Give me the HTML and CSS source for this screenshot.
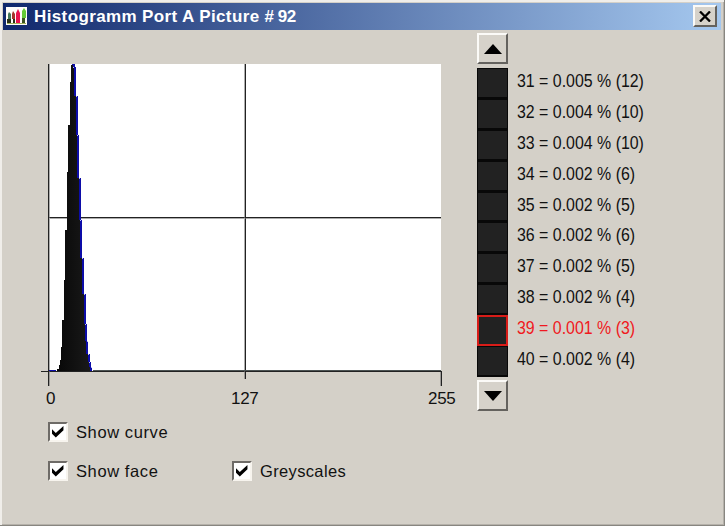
FILE: index.html
```html
<!DOCTYPE html>
<html lang="en">
<head>
<meta charset="utf-8">
<title>Histogramm</title>
<link rel="stylesheet" href="styles.css">
</head>
<body>
<div class="window">
  <header class="titlebar">
    <svg class="app-icon" width="21" height="18" viewBox="0 0 21 18">
      <path fill="#fffdfa" d="M0 0h21v18H0z"/>
      <path fill="#44775a" d="M2 7l1-2 2 2v10H2z"/>
      <path fill="#292f18" d="M1 12h4v5H1zM7 10h2v7H7z"/>
      <path fill="#a5332b" d="M6 7l1-3 2 3v5H6z"/>
      <path fill="#e9134e" d="M10 6l2-4 2 4v11h-4z"/>
      <path fill="#65cb36" d="M16 4l2-3 2 3v7h-4z"/>
      <path fill="#3c5520" d="M16 11h3v6h-3z"/>
      <path fill="#a3b45b" d="M1 16h19v1H1z"/>
    </svg>
    <h1 class="title">Histogramm Port A Picture <span class="num"># 92</span></h1>
    <button class="close" aria-label="Close"><svg width="12" height="11" viewBox="0 0 12 11"><path d="M1 .5l10 10M11 .5l-10 10" stroke="#000" stroke-width="2.3"/></svg></button>
  </header>
  <main class="content">
    <section class="left">
      <svg class="chart" width="402" height="324" viewBox="41 63 402 324" shape-rendering="crispEdges">
        <defs><linearGradient id="face"><stop offset="0" stop-color="#080808"/><stop offset="1" stop-color="#191919"/></linearGradient></defs>
        <path fill="#fff" d="M48 64h393v307H48z"/>
        <path fill="#222" d="M48 64h1v322h-1zM41 371h401v1H41zM245 64h1v315h-1zM48 217h393v1H48zM441 371h1v15h-1z"/>
        <path fill="#777" opacity=".6" d="M49 64h1v322h-1zM244 64h1v315h-1zM49 218h392v1H49zM440 372h1v14h-1z"/>
        <path fill="#4b5252" d="M93 370h348v1H93z"/>
        <path fill="#0c0ca8" d="M49 370h7v1h-7zM72 64H75V67H76V96H78V135H79V178H81V220H82V258H84V294H86V324H87V341H88V354H90V362H91V367H92V371H72z"/>
        <path fill="url(#face)" d="M57 371V369H59V365H60V360H61V347H62V320H64V280H65V230H67V172H68V125H70V82H71V65H73V67H74V96H76V135H77V178H79V220H80V258H82V294H84V324H85V341H86V354H88V362H89V367H90V371z"/>
        <path fill="#b8b8ff" d="M73 67h1v1h-1zM76 96h1v1h-1zM77 135h1v1h-1zM79 178h1v1h-1zM80 220h1v1h-1zM82 258h1v1h-1zM84 294h1v1h-1zM85 324h1v1h-1zM87 341h1v1h-1zM88 354h1v1h-1zM89 362h1v1h-1zM91 367h1v1h-1z"/>
      </svg>
      <div class="axis"><span>0</span><span>127</span><span>255</span></div>
      <div class="options">
        <label class="option"><span class="box"><svg width="12" height="12" viewBox="0 0 11 11"><path d="M0 3l3.500 3.500L10.500 0v4L3.500 10.500 0 7z"/></svg></span><span class="curve">Show curve</span></label>
        <label class="option"><span class="box"><svg width="12" height="12" viewBox="0 0 11 11"><path d="M0 3l3.500 3.500L10.500 0v4L3.500 10.500 0 7z"/></svg></span><span class="face">Show face</span></label>
        <label class="option"><span class="box"><svg width="12" height="12" viewBox="0 0 11 11"><path d="M0 3l3.500 3.500L10.500 0v4L3.500 10.500 0 7z"/></svg></span><span class="grey">Greyscales</span></label>
      </div>
    </section>
    <aside class="values">
      <button class="scroll" aria-label="Up"><svg width="18" height="10" viewBox="0 0 18 10"><path d="M9 0l9 10H0z"/></svg></button>
      <ul class="list">
        <li><i class="swatch"></i><span>31 = 0.005 % (12)</span></li>
        <li><i class="swatch"></i><span>32 = 0.004 % (10)</span></li>
        <li><i class="swatch"></i><span>33 = 0.004 % (10)</span></li>
        <li><i class="swatch"></i><span>34 = 0.002 % (6)</span></li>
        <li><i class="swatch"></i><span>35 = 0.002 % (5)</span></li>
        <li><i class="swatch"></i><span>36 = 0.002 % (6)</span></li>
        <li><i class="swatch"></i><span>37 = 0.002 % (5)</span></li>
        <li><i class="swatch"></i><span>38 = 0.002 % (4)</span></li>
        <li class="selected"><i class="swatch"></i><span>39 = 0.001 % (3)</span></li>
        <li><i class="swatch"></i><span>40 = 0.002 % (4)</span></li>
      </ul>
      <button class="scroll" aria-label="Down"><svg width="18" height="10" viewBox="0 0 18 10"><path d="M0 0h18l-9 10z"/></svg></button>
    </aside>
  </main>
</div>
</body>
</html>
```
FILE: styles.css
```css
* { box-sizing: border-box; }
body { margin: 0; font-family: "Liberation Sans", Arial, sans-serif; color: #111; }
.window {
  width: 725px; height: 526px; padding: 3px 3px 2px;
  background: #d4d0c8;
  border: 0 solid #888680; border-width: 0 1px 1px 0;
  box-shadow: inset 2px 2px #f0eeea, inset -1px -1px #b5b1aa;
  overflow: hidden;
}
.titlebar {
  display: flex; align-items: center; height: 27px;
  padding: 0 4px 0 3px;
  background: linear-gradient(90deg, #10286c, #a5c8ef);
}
.app-icon { margin-top: -1px; }
.title { margin: 0 auto 0 7px; font-size: 17px; line-height: 24px; letter-spacing: .38px; color: #fff; white-space: nowrap; }
.num { letter-spacing: -.5px; }
button {
  display: flex; align-items: center; justify-content: center; padding: 0;
  background: #d6d2ca; border: 2px solid; border-color: #fbfaf7 #64625e #64625e #fbfaf7; border-radius: 0;
}
.close { width: 24px; height: 22px; margin-top: -1px; }
.content { display: flex; }
.left { width: 474px; padding: 33px 0 0 38px; }
.chart { display: block; }
.axis { display: grid; grid-template-columns: 19px 370px 30px; height: 26px; font-size: 17px; line-height: 24px; letter-spacing: -.3px; }
.axis span:first-child { padding-left: 5px; }
.axis span:nth-child(2) { padding-left: 171px; }
.axis span:nth-child(3) { margin-left: -2px; }
.options { display: grid; grid-template-columns: 184px 190px; grid-template-rows: 39px 39px; padding: 9px 0 0 7px; }
.option { display: flex; gap: 8px; align-items: flex-start; font-size: 16.500px; line-height: 21px; white-space: nowrap; }
.option:first-child { grid-column: 1 / 3; }
.box {
  display: flex; align-items: center; justify-content: center; width: 20px; height: 20px;
  background: #fff; border: 2px solid; border-color: #6e6b67 #f7f4ee #f7f4ee #6e6b67;
}
.curve, .face { letter-spacing: .6px; }
.grey { letter-spacing: .35px; }
.values { width: 240px; padding-top: 3px; }
.scroll { width: 31px; height: 31px; }
.list { list-style: none; margin: 4px 0 3px; padding: 0; height: 309px; display: grid; grid-template-rows: repeat(10, 1fr); }
.list li { display: flex; min-height: 0; gap: 9px; }
.list span { font-size: 18.500px; line-height: 26px; white-space: nowrap; transform: scaleX(.86); transform-origin: left; }
.swatch { width: 31px; background: #222; border: 1px solid #080808; border-width: 1px 1px 2px; }
.selected { color: #f01820; }
.selected .swatch { border: 2px solid #d81c18; }
```
